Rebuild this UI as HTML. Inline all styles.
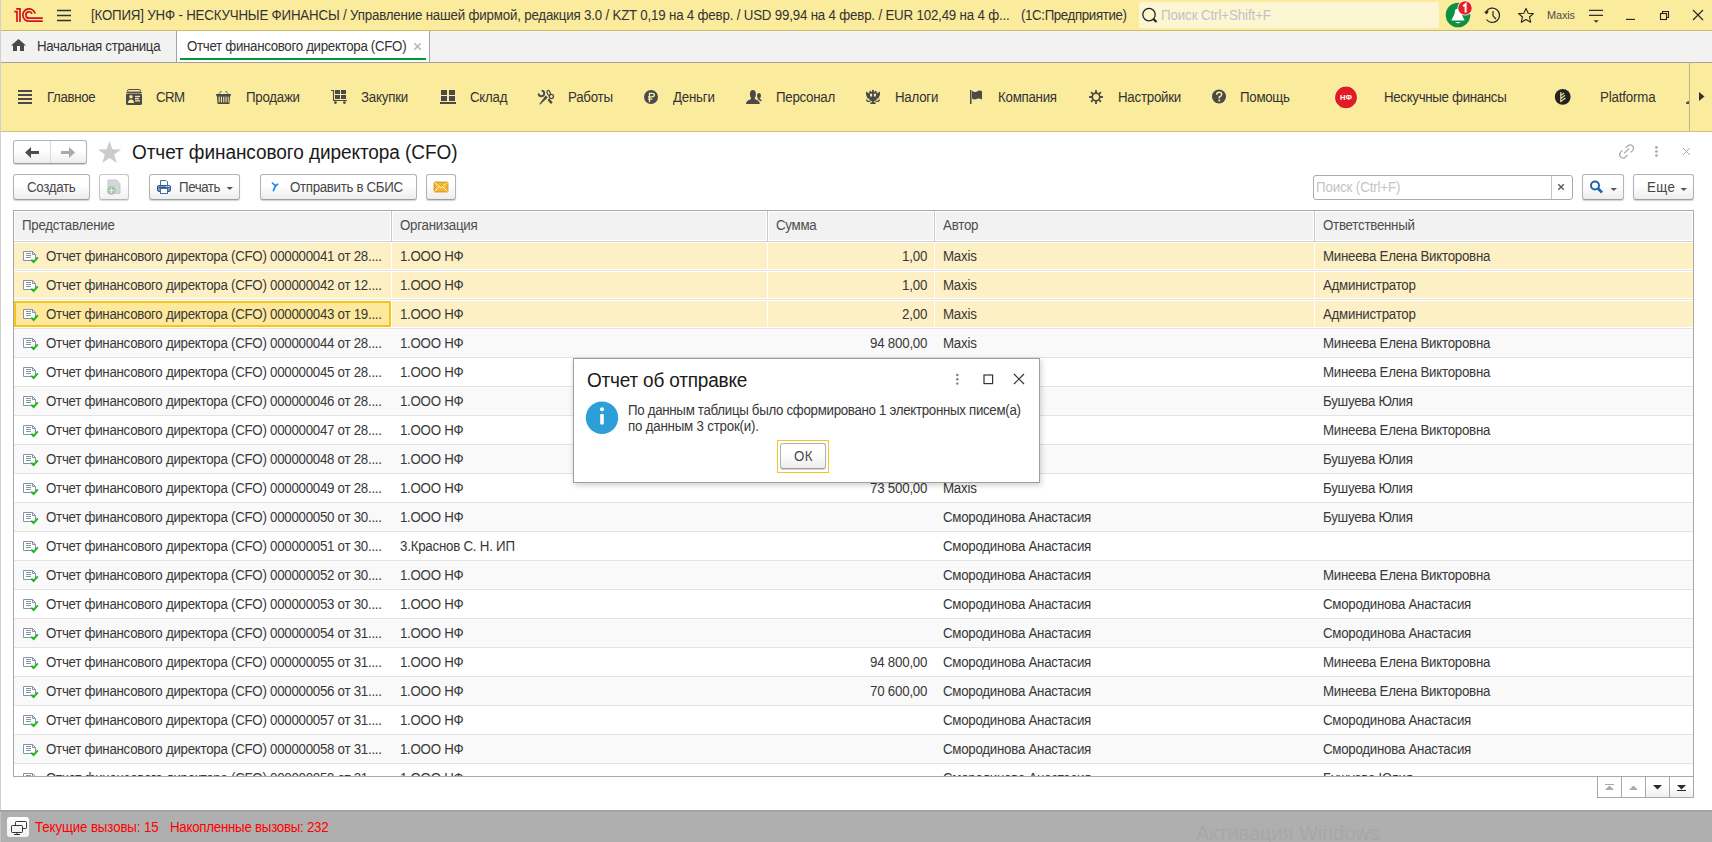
<!DOCTYPE html>
<html><head><meta charset="utf-8">
<style>
*{box-sizing:border-box;margin:0;padding:0}
html,body{width:1712px;height:842px;overflow:hidden;background:#fff;font-family:"Liberation Sans",sans-serif;font-size:13px;color:#4d4d4d}
.a{position:absolute}
.t{position:absolute;white-space:nowrap}
svg{position:absolute;overflow:visible}
.btn{position:absolute;border:1px solid #b3b3b3;border-bottom-color:#9d9d9d;border-radius:3px;background:linear-gradient(#ffffff 0%,#ffffff 40%,#ededed 100%);box-shadow:0 1px 1px rgba(0,0,0,0.18)}

.row{position:absolute;left:14px;width:1679px;height:29px}

</style></head><body>

<div class="a" style="left:0;top:0;width:1712px;height:30px;background:#fbeb9d"></div>
<div class="a" style="left:0;top:30px;width:1712px;height:1px;background:#cbb96c"></div>
<svg style="left:0;top:0" width="50" height="30" viewBox="0 0 50 30">
<g fill="none" stroke="#d5121b" stroke-width="1.7">
<path d="M14.2 11.7 H17 V22"/><path d="M16.2 8.8 H20 V22"/>
<path d="M42.8 21.2 H29 A6.2 6.2 0 1 1 35.1 13.6"/>
<path d="M42.8 18.2 H29 A3.2 3.2 0 1 1 32.1 13.9"/>
</g></svg>
<svg style="left:0;top:0" width="80" height="30"><g stroke="#333" stroke-width="1.4"><path d="M57 10.5H71M57 15.5H71M57 20.5H71"/></g></svg>
<div class="t" style="left:91px;top:7px;font-size:14px;line-height:17px;color:#333;letter-spacing:-0.191px;transform:scaleX(0.95);transform-origin:0 0">[КОПИЯ] УНФ - НЕСКУЧНЫЕ ФИНАНСЫ / Управление нашей фирмой, редакция 3.0 / KZT 0,19 на 4 февр. / USD 99,94 на 4 февр. / EUR 102,49 на 4 ф...</div>
<div class="t" style="left:1021px;top:7px;font-size:14px;line-height:17px;color:#333;letter-spacing:-0.391px;transform:scaleX(0.95);transform-origin:0 0">(1С:Предприятие)</div>
<div class="a" style="left:1139px;top:2px;width:300px;height:26px;background:#fdf6d3;border-radius:2px"></div>
<svg style="left:0;top:0" width="1200" height="30"><circle cx="1149" cy="14.6" r="6.2" fill="none" stroke="#222" stroke-width="1.3"/><path d="M1153.5 19 L1156.5 22" stroke="#222" stroke-width="2.2"/></svg>
<div class="t" style="left:1161px;top:7px;font-size:14px;line-height:17px;color:#c5bfc9;letter-spacing:-0.096px;transform:scaleX(0.95);transform-origin:0 0">Поиск Ctrl+Shift+F</div>
<svg style="left:0;top:0" width="1712" height="30">
<circle cx="1458" cy="15" r="12.3" fill="#0b9140"/>
<path d="M1451.3 20.5 L1454.5 14 L1455 10 Q1457.7 7.5 1461 10 L1461.5 14 L1464.6 20.5 Z" fill="#fff"/>
<path d="M1455 22 H1461 L1458 23.4 Z" fill="#fff"/>
<circle cx="1465" cy="8" r="7.6" fill="#fff"/>
<circle cx="1465" cy="8" r="6.8" fill="#e4202a"/>
<path d="M1463.2 6.3 L1465.6 4.2 V12.5" fill="none" stroke="#fff" stroke-width="2"/>
<g fill="none" stroke="#222" stroke-width="1.2">
<path d="M1486.2 11.5 A7.2 7.2 0 1 1 1486.5 19.5"/>
<path d="M1493 11 V15.8 L1496 19"/>
</g>
<path d="M1484 11.8 L1488.8 10.8 L1486.8 14.6 Z" fill="#222"/>
<path d="M1526 8.4 L1528.2 13.2 L1533.4 13.6 L1529.5 17 L1530.7 22.2 L1526 19.5 L1521.3 22.2 L1522.5 17 L1518.6 13.6 L1523.8 13.2 Z" fill="none" stroke="#222" stroke-width="1.1" stroke-linejoin="round"/>
<g stroke="#333" stroke-width="1.2"><path d="M1589 10.4H1603M1589 15.4H1603"/></g>
<path d="M1593.6 20.2 H1598.6 L1596.1 22.8 Z" fill="#333"/>
<path d="M1626 19.4 H1635" stroke="#222" stroke-width="1.1"/>
<g fill="none" stroke="#222" stroke-width="1.1"><rect x="1660.5" y="13.5" width="6" height="6"/><path d="M1662.5 13.5 V11.5 H1668.5 V17.5 H1666.5"/></g>
<path d="M1693 10 L1703 20 M1703 10 L1693 20" stroke="#222" stroke-width="1.1"/>
</svg>
<div class="t" style="left:1547px;top:8px;font-size:11.5px;line-height:14px;color:#4d4d4d;letter-spacing:-0.152px;transform:scaleX(0.95);transform-origin:0 0">Maxis</div>
<div class="a" style="left:0;top:31px;width:1712px;height:31px;background:#f2f2f2"></div>
<div class="a" style="left:0;top:31px;width:1712px;height:1px;background:#f5f5f8"></div>
<div class="a" style="left:0;top:62px;width:1712px;height:1px;background:#a3a3a3"></div>
<svg style="left:0;top:0" width="40" height="62"><path d="M18.5 39 L26 45.6 H24 V51 H20 V46 H17 V51 H13 V45.6 H11 Z" fill="#4a4a4a"/></svg>
<div class="t" style="left:37px;top:38px;font-size:14px;line-height:17px;color:#333;letter-spacing:-0.318px;transform:scaleX(0.95);transform-origin:0 0">Начальная страница</div>
<div class="a" style="left:176px;top:31px;width:1px;height:31px;background:#a3a3a3"></div>
<div class="a" style="left:177px;top:31px;width:252px;height:31px;background:#fff"></div>
<div class="a" style="left:429px;top:31px;width:1px;height:31px;background:#a3a3a3"></div>
<div class="a" style="left:180px;top:58px;width:246px;height:2px;background:#009639"></div>
<div class="t" style="left:187px;top:38px;font-size:14px;line-height:17px;color:#333;letter-spacing:-0.325px;transform:scaleX(0.95);transform-origin:0 0">Отчет финансового директора (CFO)</div>
<svg style="left:0;top:0" width="430" height="62"><path d="M414.3 43.3 L420.7 49.7 M420.7 43.3 L414.3 49.7" stroke="#b4b4b4" stroke-width="1.5"/></svg>
<div class="a" style="left:0;top:63px;width:1712px;height:68px;background:#fbeb9d"></div>
<div class="a" style="left:0;top:131px;width:1712px;height:1px;background:#d3c27b"></div>
<div class="a" style="left:1689px;top:63px;width:1px;height:68px;background:#bdb48f"></div>
<div class="t" style="left:47px;top:89px;font-size:14px;line-height:17px;color:#333;letter-spacing:-0.363px;transform:scaleX(0.95);transform-origin:0 0">Главное</div>
<div class="t" style="left:156px;top:89px;font-size:14px;line-height:17px;color:#333;letter-spacing:-0.652px;transform:scaleX(0.95);transform-origin:0 0">CRM</div>
<div class="t" style="left:246px;top:89px;font-size:14px;line-height:17px;color:#333;letter-spacing:-0.280px;transform:scaleX(0.95);transform-origin:0 0">Продажи</div>
<div class="t" style="left:361px;top:89px;font-size:14px;line-height:17px;color:#333;letter-spacing:-0.235px;transform:scaleX(0.95);transform-origin:0 0">Закупки</div>
<div class="t" style="left:470px;top:89px;font-size:14px;line-height:17px;color:#333;letter-spacing:-0.255px;transform:scaleX(0.95);transform-origin:0 0">Склад</div>
<div class="t" style="left:568px;top:89px;font-size:14px;line-height:17px;color:#333;letter-spacing:-0.264px;transform:scaleX(0.95);transform-origin:0 0">Работы</div>
<div class="t" style="left:673px;top:89px;font-size:14px;line-height:17px;color:#333;letter-spacing:-0.238px;transform:scaleX(0.95);transform-origin:0 0">Деньги</div>
<div class="t" style="left:776px;top:89px;font-size:14px;line-height:17px;color:#333;letter-spacing:-0.271px;transform:scaleX(0.95);transform-origin:0 0">Персонал</div>
<div class="t" style="left:895px;top:89px;font-size:14px;line-height:17px;color:#333;letter-spacing:-0.251px;transform:scaleX(0.95);transform-origin:0 0">Налоги</div>
<div class="t" style="left:998px;top:89px;font-size:14px;line-height:17px;color:#333;letter-spacing:-0.270px;transform:scaleX(0.95);transform-origin:0 0">Компания</div>
<div class="t" style="left:1118px;top:89px;font-size:14px;line-height:17px;color:#333;letter-spacing:-0.257px;transform:scaleX(0.95);transform-origin:0 0">Настройки</div>
<div class="t" style="left:1240px;top:89px;font-size:14px;line-height:17px;color:#333;letter-spacing:-0.304px;transform:scaleX(0.95);transform-origin:0 0">Помощь</div>
<div class="t" style="left:1384px;top:89px;font-size:14px;line-height:17px;color:#333;letter-spacing:-0.336px;transform:scaleX(0.95);transform-origin:0 0">Нескучные финансы</div>
<div class="t" style="left:1600px;top:89px;font-size:14px;line-height:17px;color:#333;letter-spacing:-0.166px;transform:scaleX(0.95);transform-origin:0 0">Platforma</div>
<svg style="left:0;top:0" width="1712" height="131">
<g fill="#4a4a4a">
<rect x="18" y="90" width="14" height="2"/><rect x="18" y="94" width="14" height="2"/><rect x="18" y="98" width="14" height="2"/><rect x="18" y="102" width="14" height="2"/>
</g>
<!-- CRM -->
<rect x="127.5" y="89.5" width="13" height="2.6" rx="1.3" fill="none" stroke="#4a4a4a" stroke-width="1"/>
<path d="M126 92.6 H142" stroke="#4a4a4a" stroke-width="0.9"/>
<rect x="126" y="93.5" width="16" height="11.5" rx="1.6" fill="#4a4a4a"/>
<circle cx="131" cy="96.8" r="1.7" fill="#fbeb9d"/><path d="M128 103 Q128 99.4 131 99.4 Q134 99.4 134 103 Z" fill="#fbeb9d"/>
<rect x="135" y="95.8" width="5" height="1.3" fill="#fbeb9d"/><rect x="135" y="98" width="4" height="1.3" fill="#fbeb9d"/><rect x="135" y="100.2" width="5" height="1.3" fill="#fbeb9d"/>
<!-- basket -->
<path d="M216 94 H231 V95.6 H230.2 L229.4 104 H217.6 L216.8 95.6 H216 Z" fill="#4a4a4a"/>
<g fill="#fbeb9d"><rect x="218.6" y="96.6" width="1.1" height="5.8"/><rect x="220.9" y="96.6" width="1.1" height="5.8"/><rect x="223.2" y="96.6" width="1.1" height="5.8"/><rect x="225.5" y="96.6" width="1.1" height="5.8"/><rect x="227.8" y="96.6" width="0.9" height="5.8"/></g>
<path d="M219.2 93.6 L221.4 91 M227.8 93.6 L225.6 91" stroke="#4a4a4a" stroke-width="1"/>
<!-- cart -->
<path d="M331 90.5 H333.5 V100.5 H347" fill="none" stroke="#4a4a4a" stroke-width="1.1"/>
<g fill="#4a4a4a"><rect x="335" y="90" width="5" height="4"/><rect x="341" y="90" width="5" height="4"/><rect x="335" y="95" width="5" height="4"/><rect x="341" y="95" width="5" height="4"/>
<circle cx="335.4" cy="102.6" r="1.4"/><circle cx="344.4" cy="102.6" r="1.4"/></g>
<!-- sklad -->
<g fill="#4a4a4a"><rect x="441" y="90" width="6" height="5"/><rect x="449" y="90" width="6" height="5"/><rect x="441" y="96" width="6" height="5"/><rect x="449" y="96" width="6" height="5"/><rect x="440" y="102" width="16" height="2"/></g>
<!-- raboty -->
<path d="M541.6 90.6 A2.8 2.8 0 1 1 538.6 93.4" fill="none" stroke="#4a4a4a" stroke-width="1.9"/>
<path d="M545.6 95.6 L547.8 97.4 L540.2 104.6 L539.2 104.2 Z" fill="#4a4a4a"/>
<ellipse cx="548.7" cy="92.9" rx="1.5" ry="2.5" transform="rotate(-20 548.7 92.9)" fill="none" stroke="#4a4a4a" stroke-width="1.2"/>
<circle cx="551.4" cy="96.5" r="2.1" fill="none" stroke="#4a4a4a" stroke-width="1.3"/>
<path d="M548.4 99.2 L551.8 103.2" stroke="#4a4a4a" stroke-width="2.4"/>
<!-- ruble -->
<circle cx="651" cy="97" r="7" fill="#4a4a4a"/>
<path d="M649.5 102.2 V93.4 H652 Q654.4 93.4 654.4 95.1 Q654.4 96.9 652 96.9 H648 M648 99.1 H652.4" fill="none" stroke="#fbeb9d" stroke-width="1.3"/>
<!-- personal -->
<g fill="#4a4a4a">
<ellipse cx="752.9" cy="94.3" rx="2.95" ry="4.3"/>
<path d="M746 104 Q746 100.4 750.2 99.4 L751.4 98 H754.4 L755.6 99.4 Q759.8 100.4 759.8 104 Z"/>
<ellipse cx="759" cy="95.7" rx="1.9" ry="2.8"/>
<path d="M758.2 97.6 L761.8 100.2 L761 101.4 L757.6 99.2 Z"/>
</g>
<!-- eagle -->
<g fill="#4a4a4a">
<path d="M866 91.4 Q865.4 95.6 867.6 98.4 L870.2 98.8 L870 93.8 Q868.2 92.8 866 91.4 Z"/>
<path d="M880 91.4 Q880.6 95.6 878.4 98.4 L875.8 98.8 L876 93.8 Q877.8 92.8 880 91.4 Z"/>
<rect x="869.2" y="91.8" width="7.6" height="1.9"/>
<rect x="869.6" y="90.8" width="1.4" height="1.2"/><rect x="875" y="90.8" width="1.4" height="1.2"/>
<rect x="872.1" y="89.9" width="1.8" height="14"/>
<path d="M869.4 96.6 H876.6 V99.8 Q875 101.4 873 101.4 Q871 101.4 869.4 99.8 Z"/>
<path d="M870.6 102.2 H875.4 L875.8 104 H870.2 Z"/>
</g>
<path d="M866.4 99.4 Q867.6 102.4 870.4 101" fill="none" stroke="#4a4a4a" stroke-width="1.3"/>
<path d="M879.6 99.4 Q878.4 102.4 875.6 101" fill="none" stroke="#4a4a4a" stroke-width="1.3"/>
<!-- flag -->
<rect x="970" y="90" width="1.5" height="14" fill="#4a4a4a"/><path d="M972 90.8 Q974.6 93 977 91.4 Q979.4 89.6 982 91.2 V99.8 Q979.8 97.8 977 98.8 Q974.4 100.2 972 98.6 Z" fill="#4a4a4a"/>
<!-- gear -->
<circle cx="1096" cy="97" r="3.8" fill="none" stroke="#4a4a4a" stroke-width="1.8"/>
<g fill="#4a4a4a"><rect x="1095.1" y="90" width="1.8" height="3.2" transform="rotate(0 1096 97)"/><rect x="1095.1" y="90" width="1.8" height="3.2" transform="rotate(45 1096 97)"/><rect x="1095.1" y="90" width="1.8" height="3.2" transform="rotate(90 1096 97)"/><rect x="1095.1" y="90" width="1.8" height="3.2" transform="rotate(135 1096 97)"/><rect x="1095.1" y="90" width="1.8" height="3.2" transform="rotate(180 1096 97)"/><rect x="1095.1" y="90" width="1.8" height="3.2" transform="rotate(225 1096 97)"/><rect x="1095.1" y="90" width="1.8" height="3.2" transform="rotate(270 1096 97)"/><rect x="1095.1" y="90" width="1.8" height="3.2" transform="rotate(315 1096 97)"/></g>
<!-- help -->
<circle cx="1219" cy="96.5" r="7" fill="#4a4a4a"/>
<path d="M1216.7 94.7 Q1216.7 92.2 1219.2 92.2 Q1221.7 92.2 1221.7 94.4 Q1221.7 96 1219.3 97 V98.6" fill="none" stroke="#fbeb9d" stroke-width="1.5"/>
<rect x="1218.4" y="99.6" width="1.8" height="1.8" fill="#fbeb9d"/>
<!-- NF -->
<circle cx="1346" cy="97.4" r="11.6" fill="#fff" opacity="0.55"/><circle cx="1346" cy="97.4" r="10.9" fill="#e01b22"/>
<text x="1346" y="100" font-family="Liberation Sans" font-weight="bold" font-size="7.6" fill="#fff" text-anchor="middle">НФ</text>
<!-- platforma -->
<circle cx="1562.7" cy="96.9" r="7.9" fill="#222"/>
<path d="M1560.8 102.2 V92 M1560.8 101.6 L1565.4 98 M1560.8 98.6 L1565 95.2 M1560.8 95.6 L1564 93" stroke="#fbeb9d" stroke-width="1.1" fill="none"/>
<path d="M1699 92 L1704.5 96.5 L1699 101 Z" fill="#333"/>
<path d="M1686 102.5 Q1687 101 1689 101 V104 H1686 Z" fill="#555"/>
</svg>
<div class="a" style="left:0;top:132px;width:1712px;height:678px;background:#fff"></div>
<div class="a" style="left:0;top:0;width:1px;height:810px;background:#d0d0d0"></div>
<div class="btn" style="left:13px;top:140px;width:74px;height:24px"></div>
<div class="a" style="left:50px;top:141px;width:1px;height:22px;background:#d9d9d9"></div>
<svg style="left:0;top:0" width="130" height="170">
<path d="M25 152.5 L31 147 V151 H39 V154 H31 V158 Z" fill="#4d4d4d"/>
<path d="M75 152.5 L69 147 V151 H61 V154 H69 V158 Z" fill="#a9a9a9"/>
<path d="M109.5 141 L112.4 149.3 L121.2 149.4 L114.2 154.6 L116.8 163 L109.5 158 L102.2 163 L104.8 154.6 L97.8 149.4 L106.6 149.3 Z" fill="#cccccc"/>
</svg>
<div class="t" style="left:132px;top:140px;font-size:20px;line-height:24px;color:#1a1a1a;letter-spacing:-0.076px;transform:scaleX(0.95);transform-origin:0 0">Отчет финансового директора (CFO)</div>
<svg style="left:0;top:0" width="1712" height="170">
<g fill="none" stroke="#a9a9a9" stroke-width="1.2" stroke-linecap="round">
<path d="M1622.2 150.6 L1620.6 152.2 A3.4 3.4 0 0 0 1625.4 157 L1627.2 155.2"/>
<path d="M1626 147.6 L1627.8 145.8 A3.4 3.4 0 0 1 1632.6 150.6 L1631 152.2"/>
<path d="M1624.4 153.2 L1628.6 149"/>
</g>
<g fill="#a8a8a8"><circle cx="1656.4" cy="147.4" r="1.35"/><circle cx="1656.4" cy="151.5" r="1.35"/><circle cx="1656.4" cy="155.6" r="1.35"/></g>
<path d="M1683 148 L1690 155 M1690 148 L1683 155" stroke="#a8a8a8" stroke-width="1"/>
</svg>
<div class="btn" style="left:13px;top:174px;width:77px;height:26px"></div>
<div class="t" style="left:27px;top:179px;font-size:14px;line-height:17px;color:#474747;letter-spacing:-0.315px;transform:scaleX(0.95);transform-origin:0 0">Создать</div>
<div class="btn" style="left:99px;top:174px;width:30px;height:26px;opacity:0.75"></div>
<svg style="left:0;top:0" width="460" height="210">
<path d="M108 180 H116.5 L120 183.5 V193.5 H108 Z" fill="#d6d6d6" stroke="#b9c3cf" stroke-width="0.8"/>
<circle cx="111.5" cy="190.5" r="4.3" fill="#a7c4a7"/><path d="M111.5 187.8 V193.2 M108.8 190.5 H114.2" stroke="#e9f1e9" stroke-width="1"/>
</svg>
<div class="btn" style="left:149px;top:174px;width:91px;height:26px"></div>
<svg style="left:0;top:0" width="460" height="210">
<path d="M160.5 185.5 V180.5 H166 L167.5 182 V185.5" fill="#fff" stroke="#4a6e96" stroke-width="1"/>
<rect x="157.5" y="185.5" width="13" height="6" rx="1.5" fill="#6d98c8" stroke="#2c5987" stroke-width="1"/>
<path d="M159 187.5 H169" stroke="#2c5987" stroke-width="1"/>
<circle cx="166.6" cy="186.4" r="0.6" fill="#fff"/><circle cx="168.6" cy="186.4" r="0.6" fill="#fff"/>
<rect x="160.5" y="188.5" width="7" height="5" fill="#fff" stroke="#4a6e96" stroke-width="1"/>
<path d="M226.5 187 H233 L229.75 190 Z" fill="#555"/>
</svg>
<div class="t" style="left:179px;top:179px;font-size:14px;line-height:17px;color:#474747;letter-spacing:-0.446px;transform:scaleX(0.95);transform-origin:0 0">Печать</div>
<div class="btn" style="left:260px;top:174px;width:157px;height:26px"></div>
<div class="t" style="left:290px;top:179px;font-size:14px;line-height:17px;color:#474747;letter-spacing:-0.340px;transform:scaleX(0.95);transform-origin:0 0">Отправить в СБИС</div>
<svg style="left:0;top:0" width="460" height="210"><path d="M272.4 183 L275.6 186 L277.8 184.2 M275.6 185.6 L273.4 190.6" stroke="#1186f5" stroke-width="1.6" stroke-linecap="round" fill="none"/><path d="M274 183.8 L276.6 185.2 L275.6 187.6 Z" fill="#1186f5"/></svg>
<div class="btn" style="left:426px;top:174px;width:30px;height:26px"></div>
<svg style="left:0;top:0" width="460" height="210">
<rect x="434" y="182" width="14" height="10" rx="1" fill="#f3b431" stroke="#d08a14" stroke-width="0.8"/>
<path d="M434.5 182.5 L441 188 L447.5 182.5 M434.5 191.5 L439 187 M447.5 191.5 L443 187" stroke="#fff3cf" stroke-width="1" fill="none"/>
</svg>
<div class="a" style="left:1313px;top:175px;width:260px;height:25px;border:1px solid #ababab;border-radius:3px;background:#fff"></div>
<div class="a" style="left:1551px;top:176px;width:1px;height:23px;background:#c4c4c4"></div>
<div class="t" style="left:1316px;top:179px;font-size:14px;line-height:17px;color:#c4c4c4;letter-spacing:-0.124px;transform:scaleX(0.95);transform-origin:0 0">Поиск (Ctrl+F)</div>
<svg style="left:0;top:0" width="1712" height="210"><path d="M1558.3 184.2 L1563.8 189.7 M1563.8 184.2 L1558.3 189.7" stroke="#555" stroke-width="1.3"/></svg>
<div class="btn" style="left:1582px;top:174px;width:42px;height:26px"></div>
<div class="btn" style="left:1633px;top:174px;width:61px;height:26px"></div>
<div class="t" style="left:1647px;top:179px;font-size:14px;line-height:17px;color:#474747;letter-spacing:0.415px;transform:scaleX(0.95);transform-origin:0 0">Еще</div>
<svg style="left:0;top:0" width="1712" height="210">
<circle cx="1595" cy="185.5" r="4" fill="none" stroke="#1f63b0" stroke-width="2"/>
<path d="M1598 188.5 L1602 192.5" stroke="#1f63b0" stroke-width="2.6"/>
<path d="M1610.5 188 H1617 L1613.75 191 Z" fill="#555"/>
<path d="M1680.5 188 H1687 L1683.75 191 Z" fill="#555"/>
</svg>
<div class="a" style="left:13px;top:210px;width:1681px;height:567px;border:1px solid #a9a9a9;background:#fff"></div>
<div class="a" style="left:15px;top:212px;width:1677px;height:28px;background:#f2f2f2"></div>
<div class="a" style="left:14px;top:241px;width:1679px;height:1px;background:#d2d2d2"></div>
<div class="a" style="left:390px;top:211px;width:3px;height:30px;background:#fff"></div>
<div class="a" style="left:391px;top:211px;width:1px;height:30px;background:#c9c9c9"></div>
<div class="a" style="left:766px;top:211px;width:3px;height:30px;background:#fff"></div>
<div class="a" style="left:767px;top:211px;width:1px;height:30px;background:#c9c9c9"></div>
<div class="a" style="left:933px;top:211px;width:3px;height:30px;background:#fff"></div>
<div class="a" style="left:934px;top:211px;width:1px;height:30px;background:#c9c9c9"></div>
<div class="a" style="left:1313px;top:211px;width:3px;height:30px;background:#fff"></div>
<div class="a" style="left:1314px;top:211px;width:1px;height:30px;background:#c9c9c9"></div>
<div class="t" style="left:22px;top:217px;font-size:14px;line-height:17px;color:#4d4d4d;letter-spacing:-0.270px;transform:scaleX(0.95);transform-origin:0 0">Представление</div>
<div class="t" style="left:400px;top:217px;font-size:14px;line-height:17px;color:#4d4d4d;letter-spacing:-0.264px;transform:scaleX(0.95);transform-origin:0 0">Организация</div>
<div class="t" style="left:776px;top:217px;font-size:14px;line-height:17px;color:#4d4d4d;letter-spacing:-0.287px;transform:scaleX(0.95);transform-origin:0 0">Сумма</div>
<div class="t" style="left:943px;top:217px;font-size:14px;line-height:17px;color:#4d4d4d;letter-spacing:-0.234px;transform:scaleX(0.95);transform-origin:0 0">Автор</div>
<div class="t" style="left:1323px;top:217px;font-size:14px;line-height:17px;color:#4d4d4d;letter-spacing:-0.267px;transform:scaleX(0.95);transform-origin:0 0">Ответственный</div>
<div class="a" style="left:14px;top:242px;width:1679px;height:534px;overflow:hidden">
<div class="a" style="left:0;top:0px;width:1679px;height:29px;background:#fff"></div>
<div class="a" style="left:0;top:1px;width:1679px;height:26px;background:#fdf0c4"></div>
<div class="a" style="left:0;top:28px;width:1679px;height:1px;background:#e3e3e3"></div>
<div class="a" style="left:377px;top:0px;width:1px;height:28px;background:#fff"></div>
<div class="a" style="left:753px;top:0px;width:1px;height:28px;background:#fff"></div>
<div class="a" style="left:920px;top:0px;width:1px;height:28px;background:#fff"></div>
<div class="a" style="left:1300px;top:0px;width:1px;height:28px;background:#fff"></div>
<svg style="left:9px;top:9px" width="18" height="14" viewBox="0 0 18 14"><path d="M0.5 0.5 H9.5 L12.5 3.5 V9.5 H0.5 Z" fill="#fff" stroke="#8595a6" stroke-width="1"/><path d="M9.5 0.5 V3.5 H12.5" fill="none" stroke="#8595a6" stroke-width="1"/><path d="M3 2.5H8M3 4.5H8M3 6.5H8" stroke="#8595a6" stroke-width="1"/><path d="M8.2 8.6 L10.6 11 L14.8 6.4" fill="none" stroke="#22b622" stroke-width="2"/></svg>
<div class="t" style="left:32px;top:6px;font-size:14px;line-height:17px;color:#383838;letter-spacing:-0.282px;transform:scaleX(0.95);transform-origin:0 0">Отчет финансового директора (CFO) 000000041 от 28....</div>
<div class="t" style="left:386px;top:6px;font-size:14px;line-height:17px;color:#383838;letter-spacing:-0.295px;transform:scaleX(0.95);transform-origin:0 0">1.ООО НФ</div>
<div class="t" style="left:887.6px;top:6px;font-size:14px;line-height:17px;color:#383838;letter-spacing:-0.177px;transform:scaleX(0.95);transform-origin:0 0">1,00</div>
<div class="t" style="left:929px;top:6px;font-size:14px;line-height:17px;color:#383838;letter-spacing:-0.218px;transform:scaleX(0.95);transform-origin:0 0">Maxis</div>
<div class="t" style="left:1309px;top:6px;font-size:14px;line-height:17px;color:#383838;letter-spacing:-0.272px;transform:scaleX(0.95);transform-origin:0 0">Минеева Елена Викторовна</div>
<div class="a" style="left:0;top:29px;width:1679px;height:29px;background:#fff"></div>
<div class="a" style="left:0;top:30px;width:1679px;height:26px;background:#fdf0c4"></div>
<div class="a" style="left:0;top:57px;width:1679px;height:1px;background:#e3e3e3"></div>
<div class="a" style="left:377px;top:29px;width:1px;height:28px;background:#fff"></div>
<div class="a" style="left:753px;top:29px;width:1px;height:28px;background:#fff"></div>
<div class="a" style="left:920px;top:29px;width:1px;height:28px;background:#fff"></div>
<div class="a" style="left:1300px;top:29px;width:1px;height:28px;background:#fff"></div>
<svg style="left:9px;top:38px" width="18" height="14" viewBox="0 0 18 14"><path d="M0.5 0.5 H9.5 L12.5 3.5 V9.5 H0.5 Z" fill="#fff" stroke="#8595a6" stroke-width="1"/><path d="M9.5 0.5 V3.5 H12.5" fill="none" stroke="#8595a6" stroke-width="1"/><path d="M3 2.5H8M3 4.5H8M3 6.5H8" stroke="#8595a6" stroke-width="1"/><path d="M8.2 8.6 L10.6 11 L14.8 6.4" fill="none" stroke="#22b622" stroke-width="2"/></svg>
<div class="t" style="left:32px;top:35px;font-size:14px;line-height:17px;color:#383838;letter-spacing:-0.282px;transform:scaleX(0.95);transform-origin:0 0">Отчет финансового директора (CFO) 000000042 от 12....</div>
<div class="t" style="left:386px;top:35px;font-size:14px;line-height:17px;color:#383838;letter-spacing:-0.295px;transform:scaleX(0.95);transform-origin:0 0">1.ООО НФ</div>
<div class="t" style="left:887.6px;top:35px;font-size:14px;line-height:17px;color:#383838;letter-spacing:-0.177px;transform:scaleX(0.95);transform-origin:0 0">1,00</div>
<div class="t" style="left:929px;top:35px;font-size:14px;line-height:17px;color:#383838;letter-spacing:-0.218px;transform:scaleX(0.95);transform-origin:0 0">Maxis</div>
<div class="t" style="left:1309px;top:35px;font-size:14px;line-height:17px;color:#383838;letter-spacing:-0.271px;transform:scaleX(0.95);transform-origin:0 0">Администратор</div>
<div class="a" style="left:0;top:58px;width:1679px;height:29px;background:#fff"></div>
<div class="a" style="left:0;top:59px;width:1679px;height:26px;background:#fdf0c4"></div>
<div class="a" style="left:0;top:86px;width:1679px;height:1px;background:#e3e3e3"></div>
<div class="a" style="left:377px;top:58px;width:1px;height:28px;background:#fff"></div>
<div class="a" style="left:753px;top:58px;width:1px;height:28px;background:#fff"></div>
<div class="a" style="left:920px;top:58px;width:1px;height:28px;background:#fff"></div>
<div class="a" style="left:1300px;top:58px;width:1px;height:28px;background:#fff"></div>
<div class="a" style="left:0;top:59px;width:377px;height:26px;border:2px solid #f6c519;background:#fde89b"></div>
<svg style="left:9px;top:67px" width="18" height="14" viewBox="0 0 18 14"><path d="M0.5 0.5 H9.5 L12.5 3.5 V9.5 H0.5 Z" fill="#fff" stroke="#8595a6" stroke-width="1"/><path d="M9.5 0.5 V3.5 H12.5" fill="none" stroke="#8595a6" stroke-width="1"/><path d="M3 2.5H8M3 4.5H8M3 6.5H8" stroke="#8595a6" stroke-width="1"/><path d="M8.2 8.6 L10.6 11 L14.8 6.4" fill="none" stroke="#22b622" stroke-width="2"/></svg>
<div class="t" style="left:32px;top:64px;font-size:14px;line-height:17px;color:#383838;letter-spacing:-0.282px;transform:scaleX(0.95);transform-origin:0 0">Отчет финансового директора (CFO) 000000043 от 19....</div>
<div class="t" style="left:386px;top:64px;font-size:14px;line-height:17px;color:#383838;letter-spacing:-0.295px;transform:scaleX(0.95);transform-origin:0 0">1.ООО НФ</div>
<div class="t" style="left:887.6px;top:64px;font-size:14px;line-height:17px;color:#383838;letter-spacing:-0.177px;transform:scaleX(0.95);transform-origin:0 0">2,00</div>
<div class="t" style="left:929px;top:64px;font-size:14px;line-height:17px;color:#383838;letter-spacing:-0.218px;transform:scaleX(0.95);transform-origin:0 0">Maxis</div>
<div class="t" style="left:1309px;top:64px;font-size:14px;line-height:17px;color:#383838;letter-spacing:-0.271px;transform:scaleX(0.95);transform-origin:0 0">Администратор</div>
<div class="a" style="left:0;top:87px;width:1679px;height:29px;background:#fff"></div>
<div class="a" style="left:0;top:88px;width:1679px;height:26px;background:#f9f9f9"></div>
<div class="a" style="left:0;top:87px;width:1679px;height:28px;background:#f9f9f9"></div>
<div class="a" style="left:0;top:115px;width:1679px;height:1px;background:#e3e3e3"></div>
<svg style="left:9px;top:96px" width="18" height="14" viewBox="0 0 18 14"><path d="M0.5 0.5 H9.5 L12.5 3.5 V9.5 H0.5 Z" fill="#fff" stroke="#8595a6" stroke-width="1"/><path d="M9.5 0.5 V3.5 H12.5" fill="none" stroke="#8595a6" stroke-width="1"/><path d="M3 2.5H8M3 4.5H8M3 6.5H8" stroke="#8595a6" stroke-width="1"/><path d="M8.2 8.6 L10.6 11 L14.8 6.4" fill="none" stroke="#22b622" stroke-width="2"/></svg>
<div class="t" style="left:32px;top:93px;font-size:14px;line-height:17px;color:#383838;letter-spacing:-0.282px;transform:scaleX(0.95);transform-origin:0 0">Отчет финансового директора (CFO) 000000044 от 28....</div>
<div class="t" style="left:386px;top:93px;font-size:14px;line-height:17px;color:#383838;letter-spacing:-0.295px;transform:scaleX(0.95);transform-origin:0 0">1.ООО НФ</div>
<div class="t" style="left:855.5px;top:93px;font-size:14px;line-height:17px;color:#383838;letter-spacing:-0.228px;transform:scaleX(0.95);transform-origin:0 0">94 800,00</div>
<div class="t" style="left:929px;top:93px;font-size:14px;line-height:17px;color:#383838;letter-spacing:-0.218px;transform:scaleX(0.95);transform-origin:0 0">Maxis</div>
<div class="t" style="left:1309px;top:93px;font-size:14px;line-height:17px;color:#383838;letter-spacing:-0.272px;transform:scaleX(0.95);transform-origin:0 0">Минеева Елена Викторовна</div>
<div class="a" style="left:0;top:116px;width:1679px;height:29px;background:#fff"></div>
<div class="a" style="left:0;top:117px;width:1679px;height:26px;background:#ffffff"></div>
<div class="a" style="left:0;top:116px;width:1679px;height:28px;background:#ffffff"></div>
<div class="a" style="left:0;top:144px;width:1679px;height:1px;background:#e3e3e3"></div>
<svg style="left:9px;top:125px" width="18" height="14" viewBox="0 0 18 14"><path d="M0.5 0.5 H9.5 L12.5 3.5 V9.5 H0.5 Z" fill="#fff" stroke="#8595a6" stroke-width="1"/><path d="M9.5 0.5 V3.5 H12.5" fill="none" stroke="#8595a6" stroke-width="1"/><path d="M3 2.5H8M3 4.5H8M3 6.5H8" stroke="#8595a6" stroke-width="1"/><path d="M8.2 8.6 L10.6 11 L14.8 6.4" fill="none" stroke="#22b622" stroke-width="2"/></svg>
<div class="t" style="left:32px;top:122px;font-size:14px;line-height:17px;color:#383838;letter-spacing:-0.282px;transform:scaleX(0.95);transform-origin:0 0">Отчет финансового директора (CFO) 000000045 от 28....</div>
<div class="t" style="left:386px;top:122px;font-size:14px;line-height:17px;color:#383838;letter-spacing:-0.295px;transform:scaleX(0.95);transform-origin:0 0">1.ООО НФ</div>
<div class="t" style="left:1309px;top:122px;font-size:14px;line-height:17px;color:#383838;letter-spacing:-0.272px;transform:scaleX(0.95);transform-origin:0 0">Минеева Елена Викторовна</div>
<div class="a" style="left:0;top:145px;width:1679px;height:29px;background:#fff"></div>
<div class="a" style="left:0;top:146px;width:1679px;height:26px;background:#f9f9f9"></div>
<div class="a" style="left:0;top:145px;width:1679px;height:28px;background:#f9f9f9"></div>
<div class="a" style="left:0;top:173px;width:1679px;height:1px;background:#e3e3e3"></div>
<svg style="left:9px;top:154px" width="18" height="14" viewBox="0 0 18 14"><path d="M0.5 0.5 H9.5 L12.5 3.5 V9.5 H0.5 Z" fill="#fff" stroke="#8595a6" stroke-width="1"/><path d="M9.5 0.5 V3.5 H12.5" fill="none" stroke="#8595a6" stroke-width="1"/><path d="M3 2.5H8M3 4.5H8M3 6.5H8" stroke="#8595a6" stroke-width="1"/><path d="M8.2 8.6 L10.6 11 L14.8 6.4" fill="none" stroke="#22b622" stroke-width="2"/></svg>
<div class="t" style="left:32px;top:151px;font-size:14px;line-height:17px;color:#383838;letter-spacing:-0.282px;transform:scaleX(0.95);transform-origin:0 0">Отчет финансового директора (CFO) 000000046 от 28....</div>
<div class="t" style="left:386px;top:151px;font-size:14px;line-height:17px;color:#383838;letter-spacing:-0.295px;transform:scaleX(0.95);transform-origin:0 0">1.ООО НФ</div>
<div class="t" style="left:1309px;top:151px;font-size:14px;line-height:17px;color:#383838;letter-spacing:-0.284px;transform:scaleX(0.95);transform-origin:0 0">Бушуева Юлия</div>
<div class="a" style="left:0;top:174px;width:1679px;height:29px;background:#fff"></div>
<div class="a" style="left:0;top:175px;width:1679px;height:26px;background:#ffffff"></div>
<div class="a" style="left:0;top:174px;width:1679px;height:28px;background:#ffffff"></div>
<div class="a" style="left:0;top:202px;width:1679px;height:1px;background:#e3e3e3"></div>
<svg style="left:9px;top:183px" width="18" height="14" viewBox="0 0 18 14"><path d="M0.5 0.5 H9.5 L12.5 3.5 V9.5 H0.5 Z" fill="#fff" stroke="#8595a6" stroke-width="1"/><path d="M9.5 0.5 V3.5 H12.5" fill="none" stroke="#8595a6" stroke-width="1"/><path d="M3 2.5H8M3 4.5H8M3 6.5H8" stroke="#8595a6" stroke-width="1"/><path d="M8.2 8.6 L10.6 11 L14.8 6.4" fill="none" stroke="#22b622" stroke-width="2"/></svg>
<div class="t" style="left:32px;top:180px;font-size:14px;line-height:17px;color:#383838;letter-spacing:-0.282px;transform:scaleX(0.95);transform-origin:0 0">Отчет финансового директора (CFO) 000000047 от 28....</div>
<div class="t" style="left:386px;top:180px;font-size:14px;line-height:17px;color:#383838;letter-spacing:-0.295px;transform:scaleX(0.95);transform-origin:0 0">1.ООО НФ</div>
<div class="t" style="left:1309px;top:180px;font-size:14px;line-height:17px;color:#383838;letter-spacing:-0.272px;transform:scaleX(0.95);transform-origin:0 0">Минеева Елена Викторовна</div>
<div class="a" style="left:0;top:203px;width:1679px;height:29px;background:#fff"></div>
<div class="a" style="left:0;top:204px;width:1679px;height:26px;background:#f9f9f9"></div>
<div class="a" style="left:0;top:203px;width:1679px;height:28px;background:#f9f9f9"></div>
<div class="a" style="left:0;top:231px;width:1679px;height:1px;background:#e3e3e3"></div>
<svg style="left:9px;top:212px" width="18" height="14" viewBox="0 0 18 14"><path d="M0.5 0.5 H9.5 L12.5 3.5 V9.5 H0.5 Z" fill="#fff" stroke="#8595a6" stroke-width="1"/><path d="M9.5 0.5 V3.5 H12.5" fill="none" stroke="#8595a6" stroke-width="1"/><path d="M3 2.5H8M3 4.5H8M3 6.5H8" stroke="#8595a6" stroke-width="1"/><path d="M8.2 8.6 L10.6 11 L14.8 6.4" fill="none" stroke="#22b622" stroke-width="2"/></svg>
<div class="t" style="left:32px;top:209px;font-size:14px;line-height:17px;color:#383838;letter-spacing:-0.282px;transform:scaleX(0.95);transform-origin:0 0">Отчет финансового директора (CFO) 000000048 от 28....</div>
<div class="t" style="left:386px;top:209px;font-size:14px;line-height:17px;color:#383838;letter-spacing:-0.295px;transform:scaleX(0.95);transform-origin:0 0">1.ООО НФ</div>
<div class="t" style="left:1309px;top:209px;font-size:14px;line-height:17px;color:#383838;letter-spacing:-0.284px;transform:scaleX(0.95);transform-origin:0 0">Бушуева Юлия</div>
<div class="a" style="left:0;top:232px;width:1679px;height:29px;background:#fff"></div>
<div class="a" style="left:0;top:233px;width:1679px;height:26px;background:#ffffff"></div>
<div class="a" style="left:0;top:232px;width:1679px;height:28px;background:#ffffff"></div>
<div class="a" style="left:0;top:260px;width:1679px;height:1px;background:#e3e3e3"></div>
<svg style="left:9px;top:241px" width="18" height="14" viewBox="0 0 18 14"><path d="M0.5 0.5 H9.5 L12.5 3.5 V9.5 H0.5 Z" fill="#fff" stroke="#8595a6" stroke-width="1"/><path d="M9.5 0.5 V3.5 H12.5" fill="none" stroke="#8595a6" stroke-width="1"/><path d="M3 2.5H8M3 4.5H8M3 6.5H8" stroke="#8595a6" stroke-width="1"/><path d="M8.2 8.6 L10.6 11 L14.8 6.4" fill="none" stroke="#22b622" stroke-width="2"/></svg>
<div class="t" style="left:32px;top:238px;font-size:14px;line-height:17px;color:#383838;letter-spacing:-0.282px;transform:scaleX(0.95);transform-origin:0 0">Отчет финансового директора (CFO) 000000049 от 28....</div>
<div class="t" style="left:386px;top:238px;font-size:14px;line-height:17px;color:#383838;letter-spacing:-0.295px;transform:scaleX(0.95);transform-origin:0 0">1.ООО НФ</div>
<div class="t" style="left:855.5px;top:238px;font-size:14px;line-height:17px;color:#383838;letter-spacing:-0.228px;transform:scaleX(0.95);transform-origin:0 0">73 500,00</div>
<div class="t" style="left:929px;top:238px;font-size:14px;line-height:17px;color:#383838;letter-spacing:-0.218px;transform:scaleX(0.95);transform-origin:0 0">Maxis</div>
<div class="t" style="left:1309px;top:238px;font-size:14px;line-height:17px;color:#383838;letter-spacing:-0.284px;transform:scaleX(0.95);transform-origin:0 0">Бушуева Юлия</div>
<div class="a" style="left:0;top:261px;width:1679px;height:29px;background:#fff"></div>
<div class="a" style="left:0;top:262px;width:1679px;height:26px;background:#f9f9f9"></div>
<div class="a" style="left:0;top:261px;width:1679px;height:28px;background:#f9f9f9"></div>
<div class="a" style="left:0;top:289px;width:1679px;height:1px;background:#e3e3e3"></div>
<svg style="left:9px;top:270px" width="18" height="14" viewBox="0 0 18 14"><path d="M0.5 0.5 H9.5 L12.5 3.5 V9.5 H0.5 Z" fill="#fff" stroke="#8595a6" stroke-width="1"/><path d="M9.5 0.5 V3.5 H12.5" fill="none" stroke="#8595a6" stroke-width="1"/><path d="M3 2.5H8M3 4.5H8M3 6.5H8" stroke="#8595a6" stroke-width="1"/><path d="M8.2 8.6 L10.6 11 L14.8 6.4" fill="none" stroke="#22b622" stroke-width="2"/></svg>
<div class="t" style="left:32px;top:267px;font-size:14px;line-height:17px;color:#383838;letter-spacing:-0.282px;transform:scaleX(0.95);transform-origin:0 0">Отчет финансового директора (CFO) 000000050 от 30....</div>
<div class="t" style="left:386px;top:267px;font-size:14px;line-height:17px;color:#383838;letter-spacing:-0.295px;transform:scaleX(0.95);transform-origin:0 0">1.ООО НФ</div>
<div class="t" style="left:929px;top:267px;font-size:14px;line-height:17px;color:#383838;letter-spacing:-0.274px;transform:scaleX(0.95);transform-origin:0 0">Смородинова Анастасия</div>
<div class="t" style="left:1309px;top:267px;font-size:14px;line-height:17px;color:#383838;letter-spacing:-0.284px;transform:scaleX(0.95);transform-origin:0 0">Бушуева Юлия</div>
<div class="a" style="left:0;top:290px;width:1679px;height:29px;background:#fff"></div>
<div class="a" style="left:0;top:291px;width:1679px;height:26px;background:#ffffff"></div>
<div class="a" style="left:0;top:290px;width:1679px;height:28px;background:#ffffff"></div>
<div class="a" style="left:0;top:318px;width:1679px;height:1px;background:#e3e3e3"></div>
<svg style="left:9px;top:299px" width="18" height="14" viewBox="0 0 18 14"><path d="M0.5 0.5 H9.5 L12.5 3.5 V9.5 H0.5 Z" fill="#fff" stroke="#8595a6" stroke-width="1"/><path d="M9.5 0.5 V3.5 H12.5" fill="none" stroke="#8595a6" stroke-width="1"/><path d="M3 2.5H8M3 4.5H8M3 6.5H8" stroke="#8595a6" stroke-width="1"/><path d="M8.2 8.6 L10.6 11 L14.8 6.4" fill="none" stroke="#22b622" stroke-width="2"/></svg>
<div class="t" style="left:32px;top:296px;font-size:14px;line-height:17px;color:#383838;letter-spacing:-0.282px;transform:scaleX(0.95);transform-origin:0 0">Отчет финансового директора (CFO) 000000051 от 30....</div>
<div class="t" style="left:386px;top:296px;font-size:14px;line-height:17px;color:#383838;letter-spacing:-0.243px;transform:scaleX(0.95);transform-origin:0 0">3.Краснов С. Н. ИП</div>
<div class="t" style="left:929px;top:296px;font-size:14px;line-height:17px;color:#383838;letter-spacing:-0.274px;transform:scaleX(0.95);transform-origin:0 0">Смородинова Анастасия</div>
<div class="a" style="left:0;top:319px;width:1679px;height:29px;background:#fff"></div>
<div class="a" style="left:0;top:320px;width:1679px;height:26px;background:#f9f9f9"></div>
<div class="a" style="left:0;top:319px;width:1679px;height:28px;background:#f9f9f9"></div>
<div class="a" style="left:0;top:347px;width:1679px;height:1px;background:#e3e3e3"></div>
<svg style="left:9px;top:328px" width="18" height="14" viewBox="0 0 18 14"><path d="M0.5 0.5 H9.5 L12.5 3.5 V9.5 H0.5 Z" fill="#fff" stroke="#8595a6" stroke-width="1"/><path d="M9.5 0.5 V3.5 H12.5" fill="none" stroke="#8595a6" stroke-width="1"/><path d="M3 2.5H8M3 4.5H8M3 6.5H8" stroke="#8595a6" stroke-width="1"/><path d="M8.2 8.6 L10.6 11 L14.8 6.4" fill="none" stroke="#22b622" stroke-width="2"/></svg>
<div class="t" style="left:32px;top:325px;font-size:14px;line-height:17px;color:#383838;letter-spacing:-0.282px;transform:scaleX(0.95);transform-origin:0 0">Отчет финансового директора (CFO) 000000052 от 30....</div>
<div class="t" style="left:386px;top:325px;font-size:14px;line-height:17px;color:#383838;letter-spacing:-0.295px;transform:scaleX(0.95);transform-origin:0 0">1.ООО НФ</div>
<div class="t" style="left:929px;top:325px;font-size:14px;line-height:17px;color:#383838;letter-spacing:-0.274px;transform:scaleX(0.95);transform-origin:0 0">Смородинова Анастасия</div>
<div class="t" style="left:1309px;top:325px;font-size:14px;line-height:17px;color:#383838;letter-spacing:-0.272px;transform:scaleX(0.95);transform-origin:0 0">Минеева Елена Викторовна</div>
<div class="a" style="left:0;top:348px;width:1679px;height:29px;background:#fff"></div>
<div class="a" style="left:0;top:349px;width:1679px;height:26px;background:#ffffff"></div>
<div class="a" style="left:0;top:348px;width:1679px;height:28px;background:#ffffff"></div>
<div class="a" style="left:0;top:376px;width:1679px;height:1px;background:#e3e3e3"></div>
<svg style="left:9px;top:357px" width="18" height="14" viewBox="0 0 18 14"><path d="M0.5 0.5 H9.5 L12.5 3.5 V9.5 H0.5 Z" fill="#fff" stroke="#8595a6" stroke-width="1"/><path d="M9.5 0.5 V3.5 H12.5" fill="none" stroke="#8595a6" stroke-width="1"/><path d="M3 2.5H8M3 4.5H8M3 6.5H8" stroke="#8595a6" stroke-width="1"/><path d="M8.2 8.6 L10.6 11 L14.8 6.4" fill="none" stroke="#22b622" stroke-width="2"/></svg>
<div class="t" style="left:32px;top:354px;font-size:14px;line-height:17px;color:#383838;letter-spacing:-0.282px;transform:scaleX(0.95);transform-origin:0 0">Отчет финансового директора (CFO) 000000053 от 30....</div>
<div class="t" style="left:386px;top:354px;font-size:14px;line-height:17px;color:#383838;letter-spacing:-0.295px;transform:scaleX(0.95);transform-origin:0 0">1.ООО НФ</div>
<div class="t" style="left:929px;top:354px;font-size:14px;line-height:17px;color:#383838;letter-spacing:-0.274px;transform:scaleX(0.95);transform-origin:0 0">Смородинова Анастасия</div>
<div class="t" style="left:1309px;top:354px;font-size:14px;line-height:17px;color:#383838;letter-spacing:-0.274px;transform:scaleX(0.95);transform-origin:0 0">Смородинова Анастасия</div>
<div class="a" style="left:0;top:377px;width:1679px;height:29px;background:#fff"></div>
<div class="a" style="left:0;top:378px;width:1679px;height:26px;background:#f9f9f9"></div>
<div class="a" style="left:0;top:377px;width:1679px;height:28px;background:#f9f9f9"></div>
<div class="a" style="left:0;top:405px;width:1679px;height:1px;background:#e3e3e3"></div>
<svg style="left:9px;top:386px" width="18" height="14" viewBox="0 0 18 14"><path d="M0.5 0.5 H9.5 L12.5 3.5 V9.5 H0.5 Z" fill="#fff" stroke="#8595a6" stroke-width="1"/><path d="M9.5 0.5 V3.5 H12.5" fill="none" stroke="#8595a6" stroke-width="1"/><path d="M3 2.5H8M3 4.5H8M3 6.5H8" stroke="#8595a6" stroke-width="1"/><path d="M8.2 8.6 L10.6 11 L14.8 6.4" fill="none" stroke="#22b622" stroke-width="2"/></svg>
<div class="t" style="left:32px;top:383px;font-size:14px;line-height:17px;color:#383838;letter-spacing:-0.282px;transform:scaleX(0.95);transform-origin:0 0">Отчет финансового директора (CFO) 000000054 от 31....</div>
<div class="t" style="left:386px;top:383px;font-size:14px;line-height:17px;color:#383838;letter-spacing:-0.295px;transform:scaleX(0.95);transform-origin:0 0">1.ООО НФ</div>
<div class="t" style="left:929px;top:383px;font-size:14px;line-height:17px;color:#383838;letter-spacing:-0.274px;transform:scaleX(0.95);transform-origin:0 0">Смородинова Анастасия</div>
<div class="t" style="left:1309px;top:383px;font-size:14px;line-height:17px;color:#383838;letter-spacing:-0.274px;transform:scaleX(0.95);transform-origin:0 0">Смородинова Анастасия</div>
<div class="a" style="left:0;top:406px;width:1679px;height:29px;background:#fff"></div>
<div class="a" style="left:0;top:407px;width:1679px;height:26px;background:#ffffff"></div>
<div class="a" style="left:0;top:406px;width:1679px;height:28px;background:#ffffff"></div>
<div class="a" style="left:0;top:434px;width:1679px;height:1px;background:#e3e3e3"></div>
<svg style="left:9px;top:415px" width="18" height="14" viewBox="0 0 18 14"><path d="M0.5 0.5 H9.5 L12.5 3.5 V9.5 H0.5 Z" fill="#fff" stroke="#8595a6" stroke-width="1"/><path d="M9.5 0.5 V3.5 H12.5" fill="none" stroke="#8595a6" stroke-width="1"/><path d="M3 2.5H8M3 4.5H8M3 6.5H8" stroke="#8595a6" stroke-width="1"/><path d="M8.2 8.6 L10.6 11 L14.8 6.4" fill="none" stroke="#22b622" stroke-width="2"/></svg>
<div class="t" style="left:32px;top:412px;font-size:14px;line-height:17px;color:#383838;letter-spacing:-0.282px;transform:scaleX(0.95);transform-origin:0 0">Отчет финансового директора (CFO) 000000055 от 31....</div>
<div class="t" style="left:386px;top:412px;font-size:14px;line-height:17px;color:#383838;letter-spacing:-0.295px;transform:scaleX(0.95);transform-origin:0 0">1.ООО НФ</div>
<div class="t" style="left:855.5px;top:412px;font-size:14px;line-height:17px;color:#383838;letter-spacing:-0.228px;transform:scaleX(0.95);transform-origin:0 0">94 800,00</div>
<div class="t" style="left:929px;top:412px;font-size:14px;line-height:17px;color:#383838;letter-spacing:-0.274px;transform:scaleX(0.95);transform-origin:0 0">Смородинова Анастасия</div>
<div class="t" style="left:1309px;top:412px;font-size:14px;line-height:17px;color:#383838;letter-spacing:-0.272px;transform:scaleX(0.95);transform-origin:0 0">Минеева Елена Викторовна</div>
<div class="a" style="left:0;top:435px;width:1679px;height:29px;background:#fff"></div>
<div class="a" style="left:0;top:436px;width:1679px;height:26px;background:#f9f9f9"></div>
<div class="a" style="left:0;top:435px;width:1679px;height:28px;background:#f9f9f9"></div>
<div class="a" style="left:0;top:463px;width:1679px;height:1px;background:#e3e3e3"></div>
<svg style="left:9px;top:444px" width="18" height="14" viewBox="0 0 18 14"><path d="M0.5 0.5 H9.5 L12.5 3.5 V9.5 H0.5 Z" fill="#fff" stroke="#8595a6" stroke-width="1"/><path d="M9.5 0.5 V3.5 H12.5" fill="none" stroke="#8595a6" stroke-width="1"/><path d="M3 2.5H8M3 4.5H8M3 6.5H8" stroke="#8595a6" stroke-width="1"/><path d="M8.2 8.6 L10.6 11 L14.8 6.4" fill="none" stroke="#22b622" stroke-width="2"/></svg>
<div class="t" style="left:32px;top:441px;font-size:14px;line-height:17px;color:#383838;letter-spacing:-0.282px;transform:scaleX(0.95);transform-origin:0 0">Отчет финансового директора (CFO) 000000056 от 31....</div>
<div class="t" style="left:386px;top:441px;font-size:14px;line-height:17px;color:#383838;letter-spacing:-0.295px;transform:scaleX(0.95);transform-origin:0 0">1.ООО НФ</div>
<div class="t" style="left:855.5px;top:441px;font-size:14px;line-height:17px;color:#383838;letter-spacing:-0.228px;transform:scaleX(0.95);transform-origin:0 0">70 600,00</div>
<div class="t" style="left:929px;top:441px;font-size:14px;line-height:17px;color:#383838;letter-spacing:-0.274px;transform:scaleX(0.95);transform-origin:0 0">Смородинова Анастасия</div>
<div class="t" style="left:1309px;top:441px;font-size:14px;line-height:17px;color:#383838;letter-spacing:-0.272px;transform:scaleX(0.95);transform-origin:0 0">Минеева Елена Викторовна</div>
<div class="a" style="left:0;top:464px;width:1679px;height:29px;background:#fff"></div>
<div class="a" style="left:0;top:465px;width:1679px;height:26px;background:#ffffff"></div>
<div class="a" style="left:0;top:464px;width:1679px;height:28px;background:#ffffff"></div>
<div class="a" style="left:0;top:492px;width:1679px;height:1px;background:#e3e3e3"></div>
<svg style="left:9px;top:473px" width="18" height="14" viewBox="0 0 18 14"><path d="M0.5 0.5 H9.5 L12.5 3.5 V9.5 H0.5 Z" fill="#fff" stroke="#8595a6" stroke-width="1"/><path d="M9.5 0.5 V3.5 H12.5" fill="none" stroke="#8595a6" stroke-width="1"/><path d="M3 2.5H8M3 4.5H8M3 6.5H8" stroke="#8595a6" stroke-width="1"/><path d="M8.2 8.6 L10.6 11 L14.8 6.4" fill="none" stroke="#22b622" stroke-width="2"/></svg>
<div class="t" style="left:32px;top:470px;font-size:14px;line-height:17px;color:#383838;letter-spacing:-0.282px;transform:scaleX(0.95);transform-origin:0 0">Отчет финансового директора (CFO) 000000057 от 31....</div>
<div class="t" style="left:386px;top:470px;font-size:14px;line-height:17px;color:#383838;letter-spacing:-0.295px;transform:scaleX(0.95);transform-origin:0 0">1.ООО НФ</div>
<div class="t" style="left:929px;top:470px;font-size:14px;line-height:17px;color:#383838;letter-spacing:-0.274px;transform:scaleX(0.95);transform-origin:0 0">Смородинова Анастасия</div>
<div class="t" style="left:1309px;top:470px;font-size:14px;line-height:17px;color:#383838;letter-spacing:-0.274px;transform:scaleX(0.95);transform-origin:0 0">Смородинова Анастасия</div>
<div class="a" style="left:0;top:493px;width:1679px;height:29px;background:#fff"></div>
<div class="a" style="left:0;top:494px;width:1679px;height:26px;background:#f9f9f9"></div>
<div class="a" style="left:0;top:493px;width:1679px;height:28px;background:#f9f9f9"></div>
<div class="a" style="left:0;top:521px;width:1679px;height:1px;background:#e3e3e3"></div>
<svg style="left:9px;top:502px" width="18" height="14" viewBox="0 0 18 14"><path d="M0.5 0.5 H9.5 L12.5 3.5 V9.5 H0.5 Z" fill="#fff" stroke="#8595a6" stroke-width="1"/><path d="M9.5 0.5 V3.5 H12.5" fill="none" stroke="#8595a6" stroke-width="1"/><path d="M3 2.5H8M3 4.5H8M3 6.5H8" stroke="#8595a6" stroke-width="1"/><path d="M8.2 8.6 L10.6 11 L14.8 6.4" fill="none" stroke="#22b622" stroke-width="2"/></svg>
<div class="t" style="left:32px;top:499px;font-size:14px;line-height:17px;color:#383838;letter-spacing:-0.282px;transform:scaleX(0.95);transform-origin:0 0">Отчет финансового директора (CFO) 000000058 от 31....</div>
<div class="t" style="left:386px;top:499px;font-size:14px;line-height:17px;color:#383838;letter-spacing:-0.295px;transform:scaleX(0.95);transform-origin:0 0">1.ООО НФ</div>
<div class="t" style="left:929px;top:499px;font-size:14px;line-height:17px;color:#383838;letter-spacing:-0.274px;transform:scaleX(0.95);transform-origin:0 0">Смородинова Анастасия</div>
<div class="t" style="left:1309px;top:499px;font-size:14px;line-height:17px;color:#383838;letter-spacing:-0.274px;transform:scaleX(0.95);transform-origin:0 0">Смородинова Анастасия</div>
<div class="a" style="left:0;top:522px;width:1679px;height:29px;background:#fff"></div>
<div class="a" style="left:0;top:523px;width:1679px;height:26px;background:#ffffff"></div>
<div class="a" style="left:0;top:522px;width:1679px;height:28px;background:#ffffff"></div>
<div class="a" style="left:0;top:550px;width:1679px;height:1px;background:#e3e3e3"></div>
<svg style="left:9px;top:531px" width="18" height="14" viewBox="0 0 18 14"><path d="M0.5 0.5 H9.5 L12.5 3.5 V9.5 H0.5 Z" fill="#fff" stroke="#8595a6" stroke-width="1"/><path d="M9.5 0.5 V3.5 H12.5" fill="none" stroke="#8595a6" stroke-width="1"/><path d="M3 2.5H8M3 4.5H8M3 6.5H8" stroke="#8595a6" stroke-width="1"/><path d="M8.2 8.6 L10.6 11 L14.8 6.4" fill="none" stroke="#22b622" stroke-width="2"/></svg>
<div class="t" style="left:32px;top:528px;font-size:14px;line-height:17px;color:#383838;letter-spacing:-0.282px;transform:scaleX(0.95);transform-origin:0 0">Отчет финансового директора (CFO) 000000059 от 31....</div>
<div class="t" style="left:386px;top:528px;font-size:14px;line-height:17px;color:#383838;letter-spacing:-0.295px;transform:scaleX(0.95);transform-origin:0 0">1.ООО НФ</div>
<div class="t" style="left:929px;top:528px;font-size:14px;line-height:17px;color:#383838;letter-spacing:-0.274px;transform:scaleX(0.95);transform-origin:0 0">Смородинова Анастасия</div>
<div class="t" style="left:1309px;top:528px;font-size:14px;line-height:17px;color:#383838;letter-spacing:-0.284px;transform:scaleX(0.95);transform-origin:0 0">Бушуева Юлия</div>
</div>
<div class="a" style="left:1597px;top:776px;width:97px;height:22px;border:1px solid #a9a9a9;background:#fff"></div>
<div class="a" style="left:1621px;top:777px;width:1px;height:20px;background:#a9a9a9"></div>
<div class="a" style="left:1645px;top:777px;width:1px;height:20px;background:#a9a9a9"></div>
<div class="a" style="left:1669px;top:777px;width:1px;height:20px;background:#a9a9a9"></div>
<div class="a" style="left:1646px;top:777px;width:47px;height:20px;background:linear-gradient(#fff 40%,#efefef)"></div>
<div class="a" style="left:1669px;top:777px;width:1px;height:20px;background:#a9a9a9"></div>
<svg style="left:0;top:0" width="1712" height="842">
<g fill="#aaaaaa"><rect x="1605" y="784" width="9" height="1"/><path d="M1605 790 L1609.5 785.5 L1614 790 Z"/><path d="M1629 790 L1633.5 785.5 L1638 790 Z"/></g>
<g fill="#2b2b2b"><path d="M1653 785 H1662 L1657.5 789.5 Z"/><path d="M1677 785 H1686 L1681.5 789.5 Z"/><rect x="1677" y="790" width="9" height="1"/></g>
</svg>
<div class="a" style="left:0;top:810px;width:1712px;height:32px;background:#afafaf"></div>
<div class="a" style="left:0;top:810px;width:1712px;height:2px;background:#a3a3a3"></div>
<div class="a" style="left:7px;top:817px;width:22px;height:20px;background:linear-gradient(#fff,#f1f1f1);border-radius:3px"></div>
<div class="a" style="left:0;top:812px;width:1px;height:30px;background:#c2c2c2"></div>
<svg style="left:0;top:0" width="40" height="842">
<g fill="none" stroke="#333" stroke-width="1"><rect x="15.5" y="821.5" width="11" height="7" rx="0.8"/><rect x="11.5" y="825.5" width="11" height="7" rx="0.8" fill="#f4f4f4"/><path d="M17 832.5 V834.5 M14 834.5 H20"/></g>
</svg>
<div class="t" style="left:35px;top:819px;font-size:14px;line-height:17px;color:#ff0000;letter-spacing:-0.123px;transform:scaleX(0.95);transform-origin:0 0">Текущие вызовы: 15</div>
<div class="t" style="left:170px;top:819px;font-size:14px;line-height:17px;color:#ff0000;letter-spacing:-0.268px;transform:scaleX(0.95);transform-origin:0 0">Накопленные вызовы: 232</div>
<div class="t" style="left:1196px;top:821px;font-size:20px;line-height:24px;color:#a7a7a7;letter-spacing:-0.020px">Активация Windows</div>
<div class="a" style="left:573px;top:358px;width:467px;height:125px;border:1px solid #9f9f9f;background:#fff;box-shadow:1px 2px 6px rgba(0,0,0,0.2)"></div>
<div class="t" style="left:587px;top:368px;font-size:20px;line-height:24px;color:#1a1a1a;letter-spacing:-0.206px;transform:scaleX(0.95);transform-origin:0 0">Отчет об отправке</div>
<svg style="left:0;top:0" width="1712" height="842">
<g fill="#7a7a7a"><circle cx="957.3" cy="375" r="1.2"/><circle cx="957.3" cy="379.3" r="1.2"/><circle cx="957.3" cy="383.6" r="1.2"/></g>
<rect x="984" y="375" width="8.6" height="8.6" fill="none" stroke="#333" stroke-width="1.2"/>
<path d="M1014 374 L1024 384 M1024 374 L1014 384" stroke="#333" stroke-width="1.2"/>
<circle cx="602" cy="417.8" r="16.2" fill="#2c9fd8"/>
<rect x="600.2" y="414" width="3.6" height="10.5" rx="1" fill="#fff"/>
<circle cx="602" cy="409.3" r="2" fill="#fff"/>
</svg>
<div class="t" style="left:628px;top:402px;font-size:14px;line-height:17px;color:#383838;letter-spacing:-0.320px;transform:scaleX(0.95);transform-origin:0 0">По данным таблицы было сформировано 1 электронных писем(а)</div>
<div class="t" style="left:628px;top:418px;font-size:14px;line-height:17px;color:#383838;letter-spacing:-0.211px;transform:scaleX(0.95);transform-origin:0 0">по данным 3 строк(и).</div>
<div class="a" style="left:777px;top:440px;width:52px;height:33px;border:1px solid #f8c51e"></div>
<div class="btn" style="left:780px;top:443px;width:46px;height:26px"></div>
<div class="t" style="left:794px;top:448px;font-size:14px;line-height:17px;color:#474747;letter-spacing:0.376px;transform:scaleX(0.95);transform-origin:0 0">ОК</div>
</body></html>
